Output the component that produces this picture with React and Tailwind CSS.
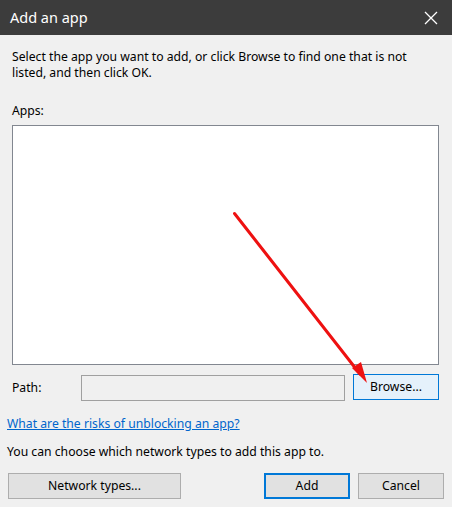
import React from "react";

export default function App() {
  return (
    <div
      className="relative w-[452px] h-[507px] bg-[#f0f0f0] text-[12.2px] text-black overflow-hidden"
      style={{ fontFamily: '"Noto Sans", "Open Sans", sans-serif' }}
    >
      <div className="h-[35px] bg-[#3c3c3c] flex items-center justify-between pl-[10px] pr-[12px]">
        <span className="text-white text-[14.5px] leading-none">Add an app</span>
        <svg width="16" height="16" viewBox="0 0 16 16" className="mr-[1px]">
          <path d="M2 2 L14 14 M14 2 L2 14" stroke="white" strokeWidth="1.3" fill="none" />
        </svg>
      </div>
      <div className="px-[12px] pt-[14px]">
        <p className="leading-[16px] pr-[20px]">
          Select the app you want to add, or click Browse to find one that is not listed, and then click OK.
        </p>
        <p className="mt-[22px] leading-[16px]">Apps:</p>
        <div className="mt-[6px] w-[427px] h-[240px] bg-white border border-[#828790]"></div>
        <div className="flex items-center mt-[10px]">
          <span className="w-[69px]">Path:</span>
          <div className="w-[264px] h-[26px] border border-[#a0a0a0] bg-[#f0f0f0]"></div>
          <button className="ml-[8px] w-[86px] h-[26px] -mt-[2px] border border-[#0078d7] bg-[#e5f1fb]">
            Browse...
          </button>
        </div>
      </div>
      <div className="px-[7px]">
        <a className="block mt-[15px] text-[#0066cc] underline leading-[16px]">
          What are the risks of unblocking an app?
        </a>
        <p className="mt-[12px] leading-[16px]">You can choose which network types to add this app to.</p>
        <div className="flex mt-[13px]">
          <button className="ml-[1px] w-[173px] h-[26px] bg-[#e1e1e1] border border-[#adadad]">Network types...</button>
          <button className="ml-[83px] w-[86px] h-[26px] bg-[#e1e1e1] border-2 border-[#0078d7]">Add</button>
          <button className="ml-[8px] w-[86px] h-[26px] bg-[#e1e1e1] border border-[#adadad]">Cancel</button>
        </div>
      </div>
      <svg className="absolute left-0 top-0 pointer-events-none" width="452" height="507">
        <line x1="234.5" y1="213.5" x2="360" y2="374" stroke="#ee1111" strokeWidth="3" strokeLinecap="round" />
        <polygon points="367,383 352,368 361,362" fill="#ee1111" />
      </svg>
    </div>
  );
}
